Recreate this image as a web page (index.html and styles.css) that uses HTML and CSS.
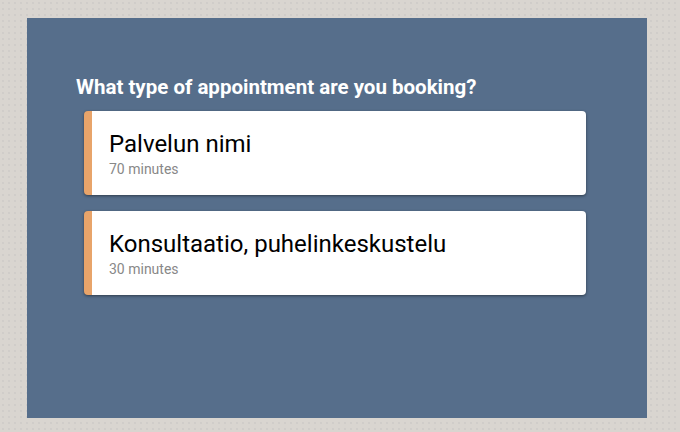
FILE: index.html
```html
<!DOCTYPE html>
<html>
<head>
<meta charset="utf-8">
<link rel="stylesheet" href="styles.css">
</head>
<body>
<div class="panel">
  <h2 class="question">What type of appointment are you booking?</h2>
  <div class="list">
    <div class="card">
      <div class="card-title">Palvelun nimi</div>
      <div class="card-sub">70 minutes</div>
    </div>
    <div class="card">
      <div class="card-title">Konsultaatio, puhelinkeskustelu</div>
      <div class="card-sub">30 minutes</div>
    </div>
  </div>
</div>
</body>
</html>
```
FILE: styles.css
```css
html, body {
  margin: 0;
  padding: 0;
}
body {
  background-color: #d9d5d0;
  background-image: radial-gradient(circle, #cdcac8 0.6px, transparent 1px);
  background-size: 6px 6px;
  font-family: Roboto, "Liberation Sans", sans-serif;
  width: 680px;
  height: 432px;
  overflow: hidden;
}
.panel {
  margin: 18px 0 0 27px;
  width: 620px;
  height: 400px;
  box-sizing: border-box;
  background: #566e8b;
  padding: 57px 0 0 49px;
}
.question {
  margin: 0;
  color: #ffffff;
  font-size: 20.5px;
  font-weight: 700;
  line-height: 24px;
}
.list {
  margin: 12px 0 0 8px;
  display: flex;
  flex-direction: column;
  gap: 16px;
  width: 502px;
}
.card {
  background: #ffffff;
  border-left: 8px solid #e8a46a;
  border-radius: 4px;
  box-shadow: 0 1px 3px rgba(0, 0, 0, 0.45);
  height: 84px;
  box-sizing: border-box;
  padding: 18px 16px 0 17px;
}
.card-title {
  color: #000;
  font-size: 24px;
  line-height: 30px;
}
.card-sub {
  color: #888;
  font-size: 14px;
  line-height: 16px;
  margin-top: 2px;
}
```
